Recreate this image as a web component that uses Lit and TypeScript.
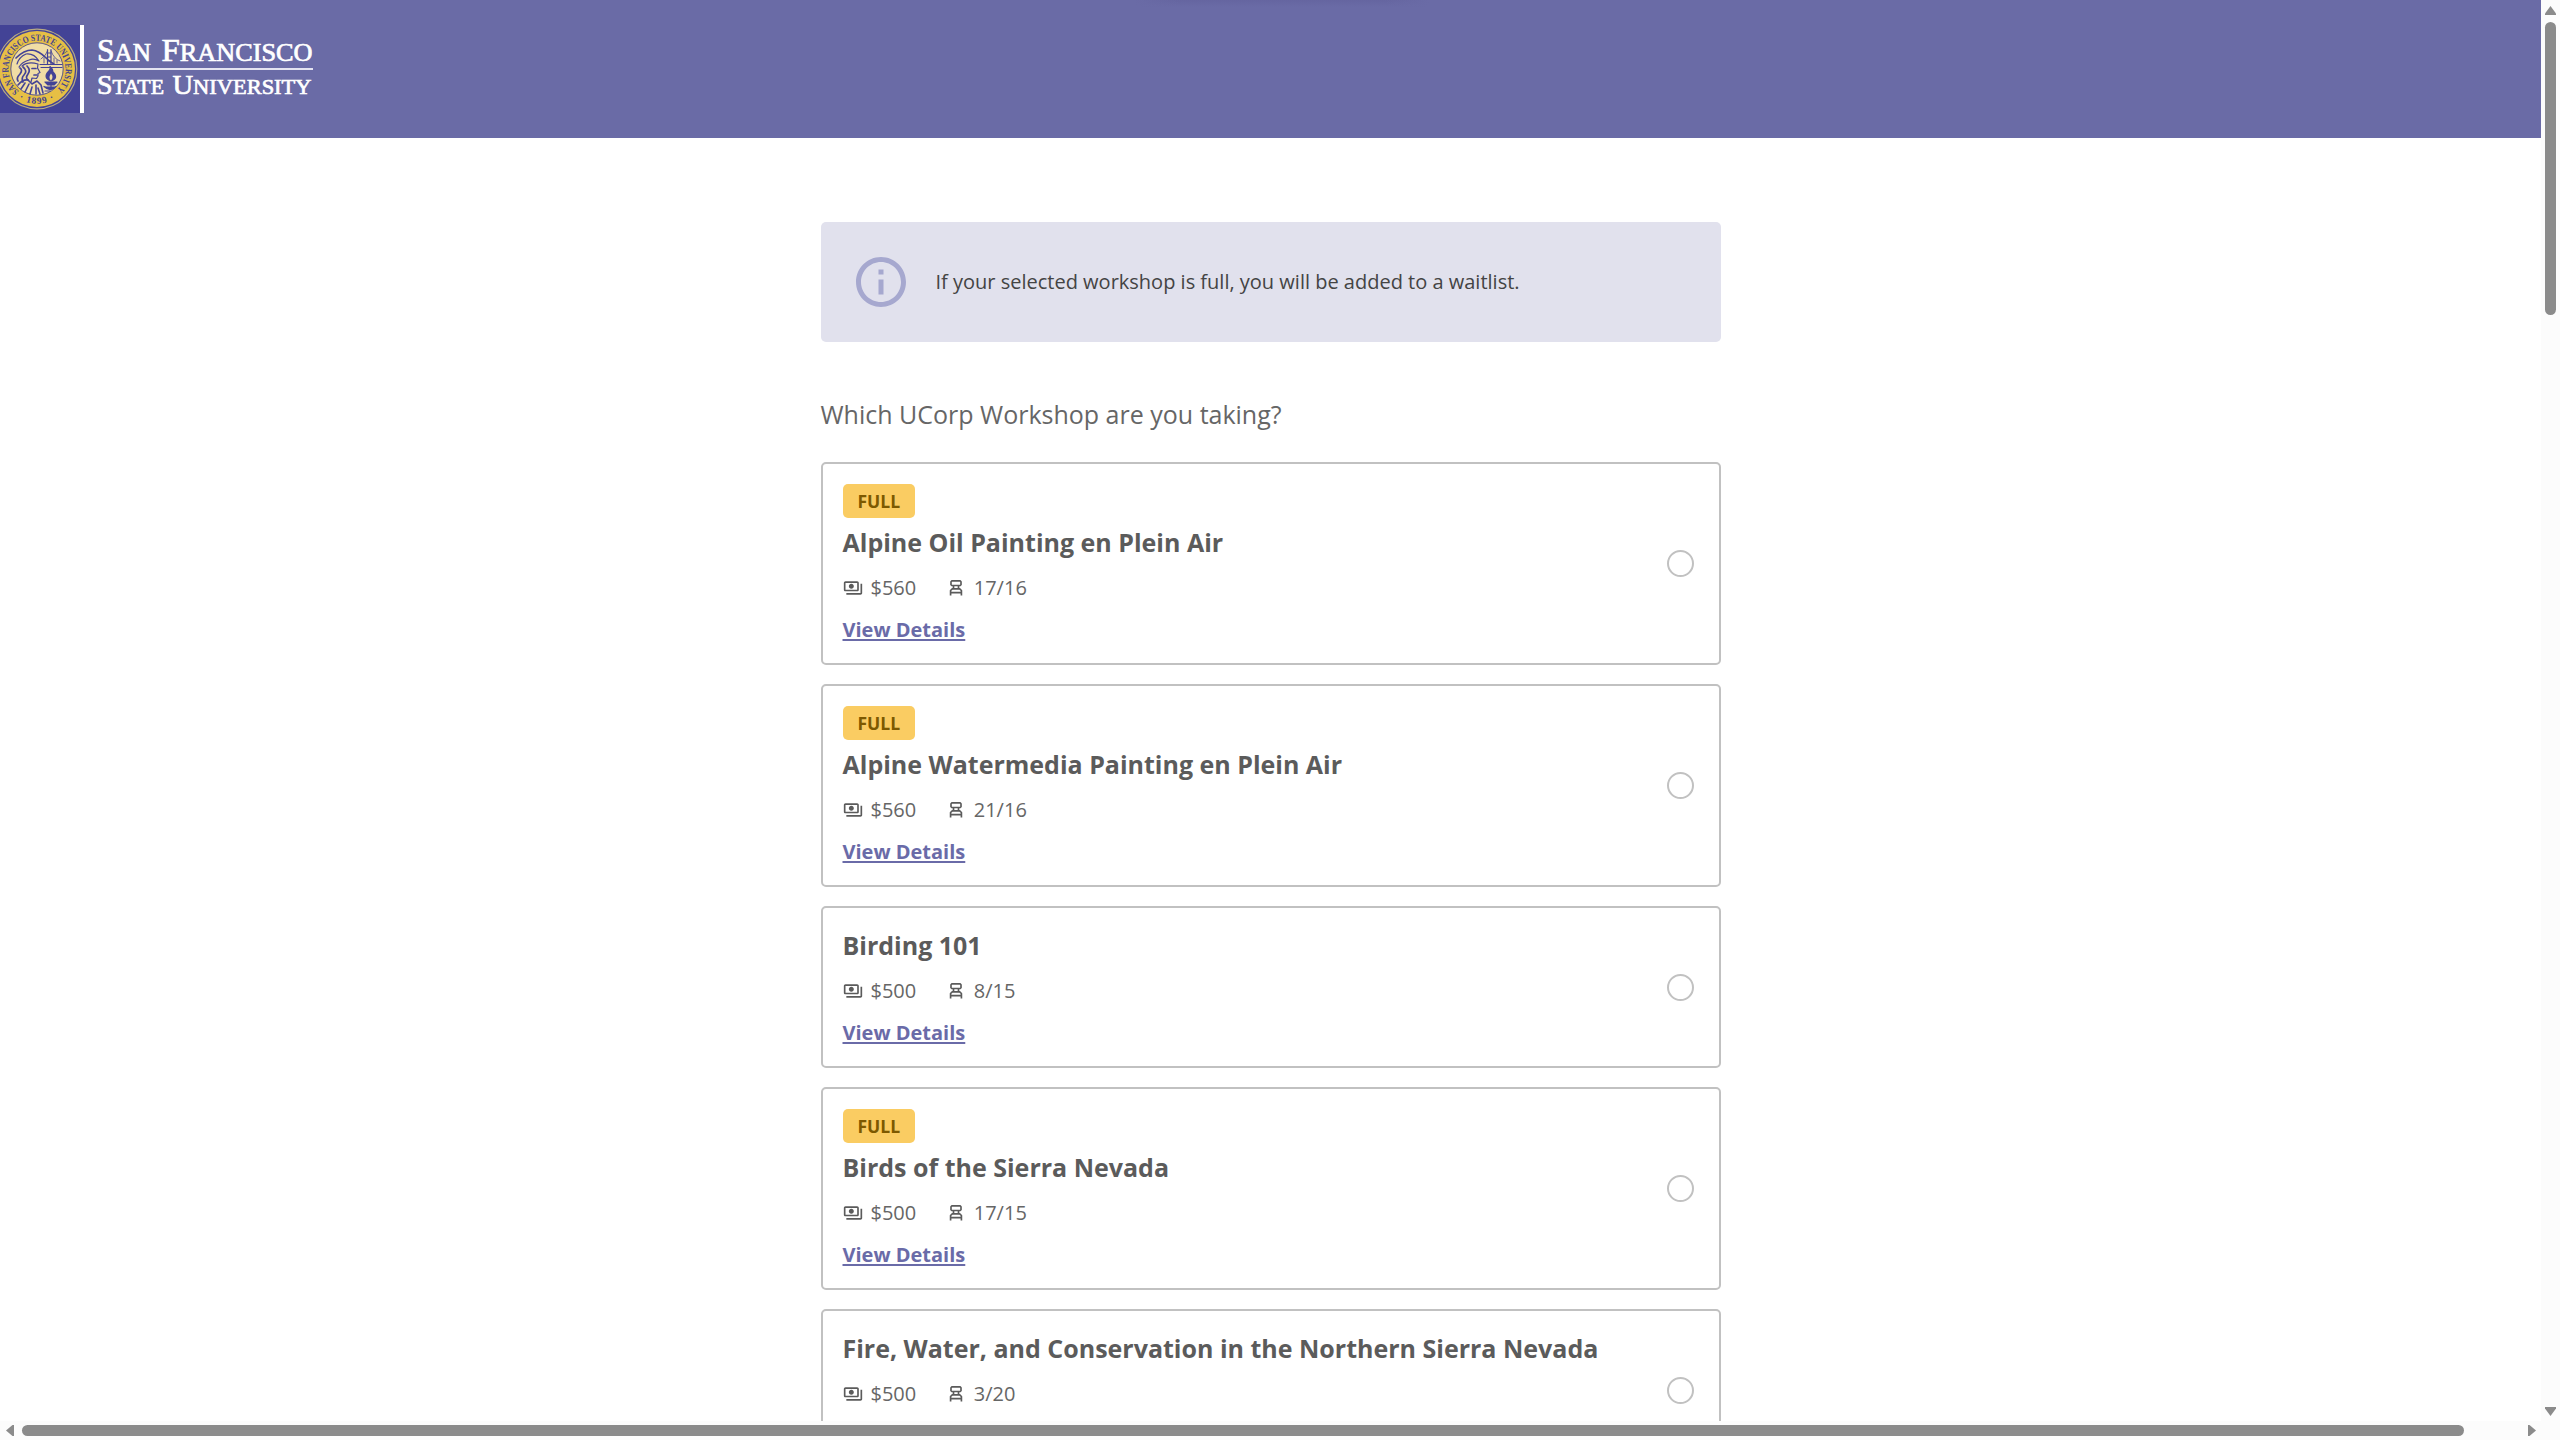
import { LitElement, html, css } from "lit";
import { customElement, property } from "lit/decorators.js";

interface Workshop { name: string; price: string; seats: string; full: boolean; }

const WORKSHOPS: Workshop[] = [
  { name: "Alpine Oil Painting en Plein Air", price: "$560", seats: "17/16", full: true },
  { name: "Alpine Watermedia Painting en Plein Air", price: "$560", seats: "21/16", full: true },
  { name: "Birding 101", price: "$500", seats: "8/15", full: false },
  { name: "Birds of the Sierra Nevada", price: "$500", seats: "17/15", full: true },
  { name: "Fire, Water, and Conservation in the Northern Sierra Nevada", price: "$500", seats: "3/20", full: false },
];

@customElement("university-logo")
class UniversityLogo extends LitElement {
  static styles = css`
    :host { display: block; width: 330px; height: 88px; }
    svg { display: block; }
    .word { font-family: "Liberation Serif", serif; fill: #fff; stroke: #fff; stroke-width: 0.7; }
    .ring { font-family: "Liberation Serif", serif; font-weight: 700; font-size: 9.5px; fill: #43438f; }
    .year { letter-spacing: 1px; }
  `;
  render() {
    return html`<svg width="330" height="88" viewBox="0 0 330 88">
      <rect width="80" height="88" fill="#434396" />
      <rect x="80" width="4" height="88" fill="#fff" />
      <defs>
        <path id="arc-top" d="M18.900 66.200A28.500 28.500 0 1 1 55.100 66.200" />
        <path id="arc-bottom" d="M12 68.200A34.800 34.800 0 0 0 62 68.200" />
      </defs>
      <g transform="translate(37 44)">
        <circle r="39.800" fill="#434396" stroke="#b8ab83" stroke-width="1.2" />
        <circle r="38" fill="#e6bf45" />
        <circle r="26.2" fill="#f0dda5" stroke="#5c5787" stroke-width="1" />
      </g>
      <g fill="none" stroke="#434396" stroke-width="1.2" stroke-linecap="round" stroke-linejoin="round">
        <path d="M16 33Q24 25 32 25Q39 26 45 32Q50 37 54 39" stroke-width="1.700" />
        <path d="M17 39Q19 32 26 29Q34 28 39 36Q34 33 29 35Q22 37 19 42" />
        <path d="M40 39.500H62M41 42.500H62M47.500 39V24.500M51 39V24.500M47.500 28H51M47.500 32H51M47.500 36H51" />
        <path d="M41 34Q46 31 47.500 26M51 26Q54 34 60 36M44 38V33M54 38V33M57 38V35" stroke-width="0.800" />
        <path d="M22 41Q28 36 38 39L37.500 43L40 47.500L38 48.500L38 51L36.500 53.500L32 53L31 57" />
        <path d="M20 43Q23 45 20 49Q16 53 18 56M23 42Q28 46 24 50Q21 53 23 57M27 41Q31 45 28 49Q25 53 28 55M32 43.500H36M34 50H37" stroke-width="1.700" />
        <path d="M18 60Q23 54 28 55L32 59L37 56L41 60L43 68M21 64L25 58M25 67L29 59M30 69L32 62M36 69V60M40 69L38 63" stroke-width="1.600" />
        <path d="M45 57H57L54 60H48ZM51 60V64M44 61.500Q48 65 51 64.500Q54 64 56 61.500M45 66H50" fill="#434396" />
        <path d="M51 56Q43 53 48 47Q51 44 50 41.500Q53 44 53 47Q59 53 51 56Z" fill="#434396" />
        <path d="M51 55.500Q48 53 51 48.500Q54 52 51 55.500Z" fill="#f0dda5" stroke="none" />
      </g>
      <text class="ring" textLength="137" lengthAdjust="spacingAndGlyphs"><textPath href="#arc-top" textLength="137" lengthAdjust="spacingAndGlyphs">SAN FRANCISCO STATE UNIVERSITY</textPath></text>
      <text class="ring year"><textPath href="#arc-bottom" startOffset="50%" text-anchor="middle">· 1899 ·</textPath></text>
      <g class="word">
        <text x="97" y="36.300" font-size="32" textLength="54" lengthAdjust="spacingAndGlyphs">S<tspan font-size="25.500">AN</tspan></text>
        <text x="161.500" y="36.300" font-size="32" textLength="151" lengthAdjust="spacingAndGlyphs">F<tspan font-size="25.500">RANCISCO</tspan></text>
        <text x="97" y="69" font-size="28" textLength="67" lengthAdjust="spacingAndGlyphs">S<tspan font-size="22">TATE</tspan></text>
        <text x="172.500" y="69" font-size="28" textLength="139" lengthAdjust="spacingAndGlyphs">U<tspan font-size="22">NIVERSITY</tspan></text>
      </g>
      <rect x="97" y="43" width="216" height="2" fill="#e4e4f1" />
    </svg>`;
  }
}

@customElement("workshop-card")
class WorkshopCard extends LitElement {
  @property({ attribute: false }) item!: Workshop;
  static styles = css`
    :host { display: flex; align-items: center; justify-content: space-between; box-sizing: border-box; flex: none;
      border: 2px solid #c1c1c1; border-radius: 5px; padding: 20px 25px 0 20px; height: 162px; color: #5b5b5b; }
    :host([full]) { height: 203px; }
    .body { align-self: flex-start; display: flex; flex-direction: column; align-items: flex-start; }
    .badge { height: 34px; line-height: 35px; padding: 0 14.5px 0 15px; border-radius: 5px; background: #facc62; color: #7d5900;
      font-size: 17.5px; font-weight: 700; margin-bottom: 7px; }
    .name { font-size: 25px; line-height: 35px; font-weight: 700; white-space: nowrap; }
    .facts { display: flex; margin-top: 13px; height: 30px; line-height: 30px; font-size: 20px; color: #666; }
    .fact { display: flex; align-items: center; }
    .fact svg { display: block; flex: none; }
    .price svg { margin-right: 8px; }
    .price { margin-right: 30px; }
    .seats svg { margin-right: 7.5px; }
    .link { margin-top: 12px; font-size: 20px; line-height: 30px; font-weight: 700; color: #6a6ba8;
      text-decoration: underline; text-decoration-thickness: 2px; text-underline-offset: 2px; }
    .radio { box-sizing: border-box; width: 27px; height: 27px; border: 2px solid #c1c1c1; border-radius: 50%; margin-bottom: 20px; }
  `;
  render() {
    const w = this.item;
    return html`<div class="body">
        ${w.full ? html`<span class="badge">FULL</span>` : null}
        <span class="name">${w.name}</span>
        <div class="facts">
          <span class="fact price"><svg width="20" height="20" viewBox="0 0 24 24" fill="#5b5b5b"><path d="M19 14V6c0-1.100-.9-2-2-2H3c-1.100 0-2 .9-2 2v8c0 1.100.9 2 2 2h14c1.100 0 2-.9 2-2zm-2 0H3V6h14v8zm-7-7c-1.660 0-3 1.340-3 3s1.340 3 3 3 3-1.340 3-3-1.340-3-3-3zm13 0v11c0 1.100-.9 2-2 2H4v-2h17V7h2z"/></svg>${w.price}</span>
          <span class="fact seats"><svg width="20" height="20" viewBox="0 0 24 24" fill="none" stroke="#5b5b5b" stroke-width="2" stroke-linejoin="round"><path d="M7 3.500H17L18 4.500V8L17 9H7L6 8V4.500ZM9 9V13M15 9V13M5.500 21V15L7.500 13H16.500L18.500 15V21M5.500 17.500H18.500"/></svg>${w.seats}</span>
        </div>
        <span class="link">View Details</span>
      </div>
      <span class="radio"></span>`;
  }
}

@customElement("app-root")
class AppRoot extends LitElement {
  static styles = css`
    :host { display: grid; grid-template: minmax(0, 1fr) 19px / minmax(0, 1fr) 19px; width: 2560px; height: 1440px; overflow: hidden;
      background: #fff; font-family: "Open Sans", sans-serif; }
    .page { overflow: hidden; display: flex; flex-direction: column; }
    .header { flex: none; box-sizing: border-box; height: 138px; padding-top: 25px;
      background: linear-gradient(to right, #6a6ba6 1135px, transparent 1180px, transparent 1385px, #6a6ba6 1430px), linear-gradient(#6565a0, #6a6ba6 7px); }
    .content { width: 900px; margin: 84px auto 0; display: flex; flex-direction: column; flex: none; }
    .notice { display: flex; align-items: center; height: 120px; box-sizing: border-box; padding-left: 30px; gap: 25px;
      border-radius: 5px; background: #e1e1ed; color: #444; font-size: 20px; }
    .notice svg { display: block; }
    .notice span { padding-bottom: 2px; }
    .question { margin: 51px 0 0; height: 69px; line-height: 42px; font-size: 25px; font-weight: 400; color: #666; }
    .list { display: flex; flex-direction: column; gap: 19px; }
    .vbar, .hbar { background: #fcfcfc; display: flex; align-items: center; }
    .vbar { flex-direction: column; padding-top: 6px; box-sizing: border-box; }
    .hbar { padding-left: 6px; box-sizing: border-box; }
    .thumb { background: #8b8b8b; border-radius: 6px; }
    .vbar .thumb { width: 11px; height: 293px; margin-top: 7px; }
    .hbar .thumb { height: 11px; width: 2442px; margin-left: 8px; }
    .vbar svg, .hbar svg { display: block; flex: none; fill: #8b8b8b; }
    .down { margin-top: auto; margin-bottom: 5px; }
    .right { margin-left: auto; margin-right: 5px; }
    .corner { background: #fcfcfc; }
  `;
  render() {
    return html`
      <main class="page">
        <header class="header"><university-logo></university-logo></header>
        <section class="content">
          <div class="notice">
            <svg width="60" height="60" viewBox="0 0 24 24" fill="#a6a8cf"><path d="M11 7h2v2h-2zm0 4h2v6h-2zm1-9C6.480 2 2 6.480 2 12s4.480 10 10 10 10-4.480 10-10S17.520 2 12 2zm0 18c-4.410 0-8-3.590-8-8s3.590-8 8-8 8 3.590 8 8-3.590 8-8 8z"/></svg>
            <span>If your selected workshop is full, you will be added to a waitlist.</span>
          </div>
          <h2 class="question">Which UCorp Workshop are you taking?</h2>
          <div class="list">${WORKSHOPS.map((w) => html`<workshop-card .item=${w} ?full=${w.full}></workshop-card>`)}</div>
        </section>
      </main>
      <div class="vbar">
        <svg width="11" height="9"><path d="M5.500 0L11 7.500V9H0V7.500Z"/></svg>
        <div class="thumb"></div>
        <svg class="down" width="11" height="9"><path d="M5.500 9L11 1.500V0H0V1.500Z"/></svg>
      </div>
      <div class="hbar">
        <svg width="8" height="11"><path d="M0 5.500L6.500 0H8V11H6.500Z"/></svg>
        <div class="thumb"></div>
        <svg class="right" width="8" height="11"><path d="M8 5.500L1.500 0H0V11H1.500Z"/></svg>
      </div>
      <div class="corner"></div>`;
  }
}
